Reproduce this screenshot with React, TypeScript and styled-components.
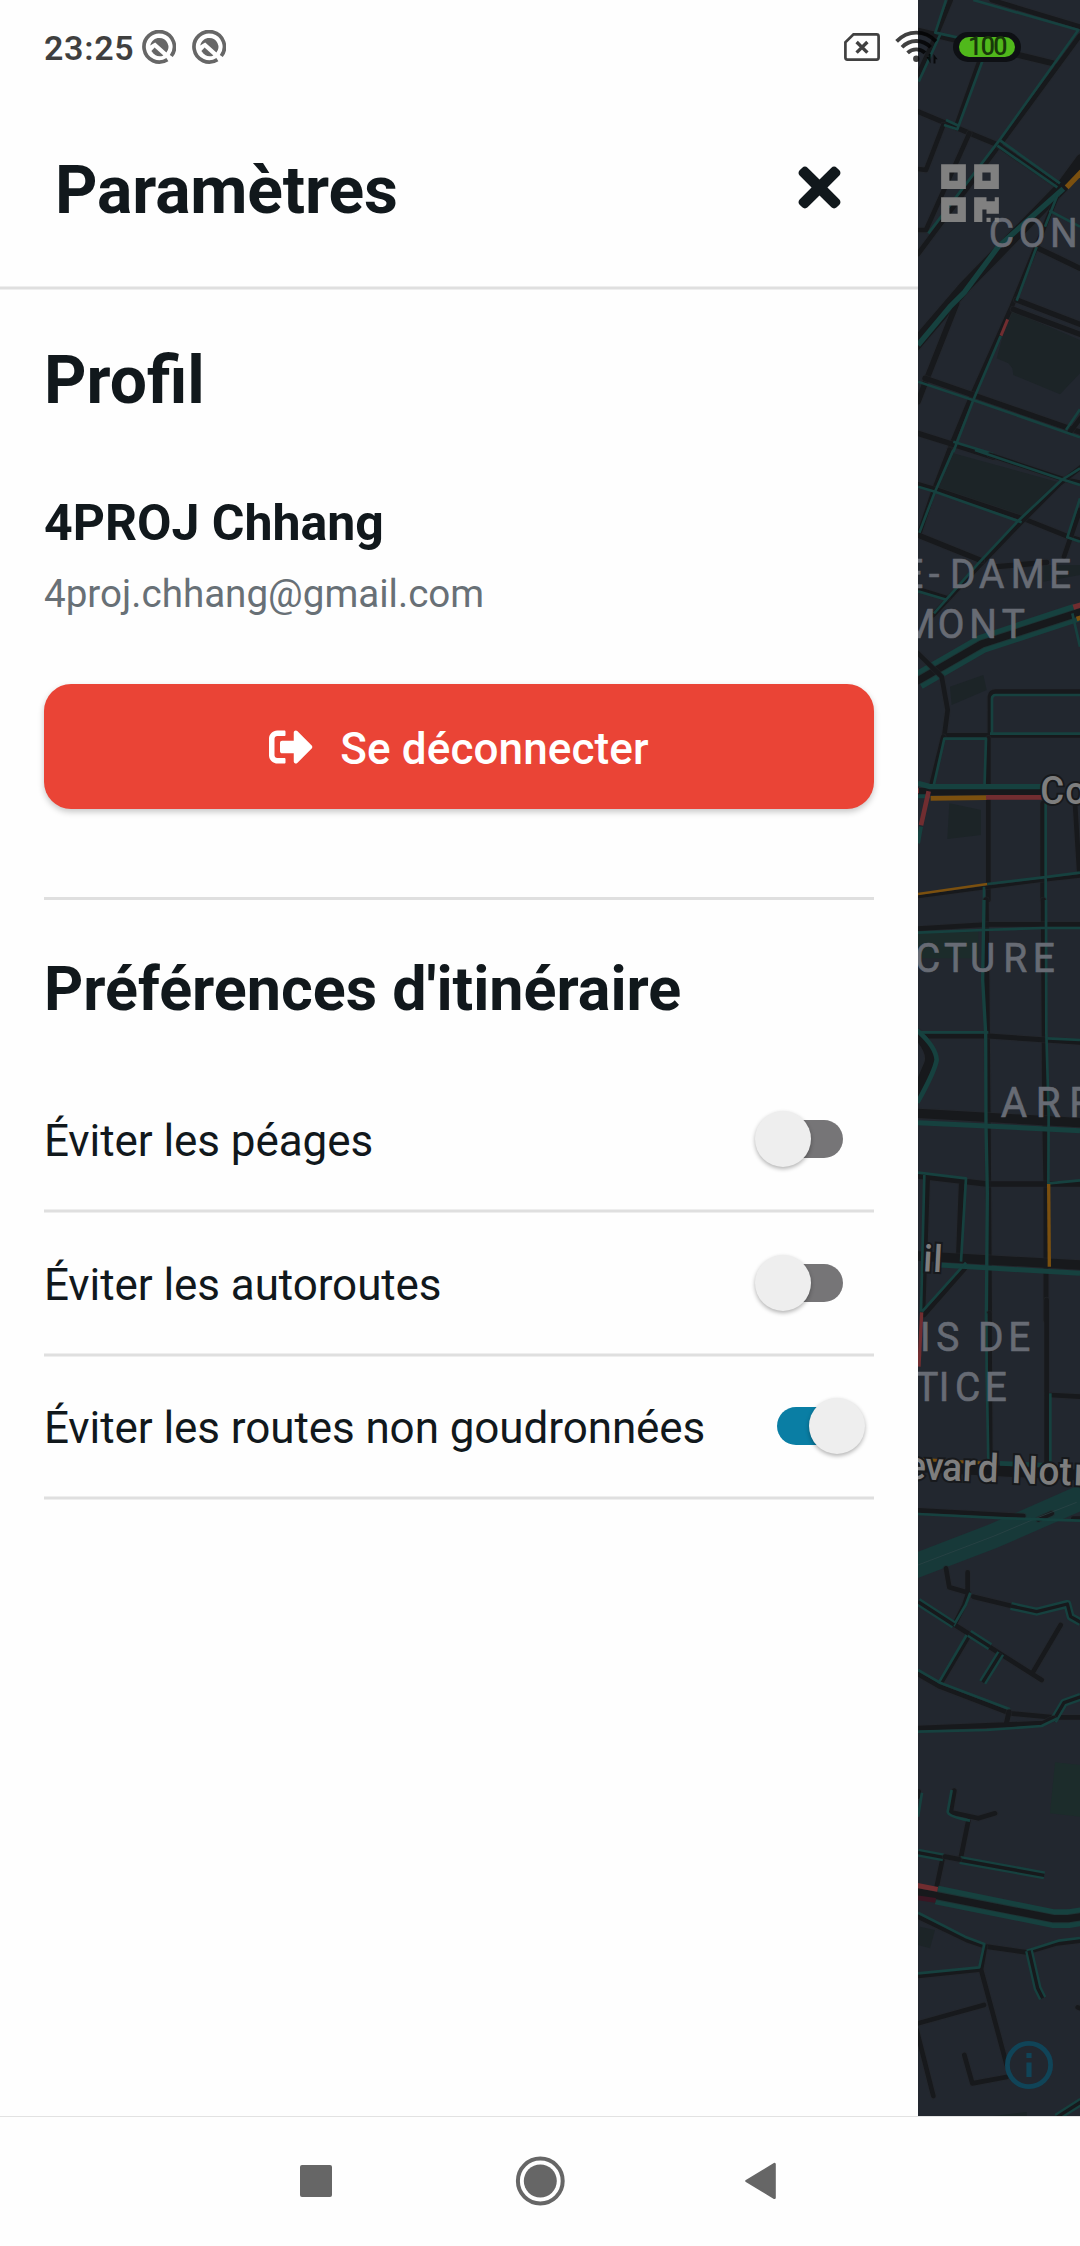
import React, { useState } from "react";
import styled, { createGlobalStyle } from "styled-components";
import { FaQrcode, FaSignOutAlt, FaTimes } from "react-icons/fa";

const GlobalStyle = createGlobalStyle`
  * { box-sizing: border-box; }
  body { margin: 0; background: #fff; font-family: Roboto, "Noto Sans", sans-serif; }
`;

const Screen = styled.div`
  position: relative;
  display: flex;
  flex-direction: column;
  width: 1080px;
  height: 2246px;
  overflow: hidden;
  background: #fefefe;
  color: #11181c;
`;

const Main = styled.main`
  display: flex;
  height: 2116px;
`;

const Drawer = styled.aside`
  width: 918px;
  background: #fefefe;
`;

const Header = styled.header`
  display: flex;
  align-items: center;
  justify-content: space-between;
  height: 286px;
  padding: 94px 68px 0 55px;
`;

const Title = styled.h1`
  margin: 2px 0 0;
  font-size: 66px;
  line-height: 78px;
  font-weight: 700;
  letter-spacing: -0.15px;
`;

const CloseButton = styled.button`
  display: flex;
  margin: 0 0 6px;
  padding: 0;
  border: 0;
  background: none;
  color: #11181c;
  font-size: 61px;
`;

const Rule = styled.hr`
  height: 4px;
  margin: 0;
  border: solid #eeeeee;
  border-width: 1px 0;
  background: #dfdfdf;
`;

const Separator = styled.hr`
  height: 3px;
  margin: 88px 0 53px;
  border: 0;
  background: #dfdfdf;
`;

const Content = styled.div`
  display: flex;
  flex-direction: column;
  padding: 51px 44px 0;
`;

const SectionTitle = styled.h2<{ $size: number; $line: number }>`
  margin: 0;
  font-size: ${(p) => p.$size}px;
  line-height: ${(p) => p.$line}px;
  font-weight: 700;
`;

const UserName = styled.div`
  margin-top: 73px;
  font-size: 50px;
  line-height: 60px;
  font-weight: 700;
`;

const Email = styled.div`
  margin-top: 18px;
  font-size: 38.6px;
  line-height: 46px;
  color: #687076;
`;

const LogoutButton = styled.button`
  display: flex;
  align-items: center;
  justify-content: center;
  gap: 27px;
  height: 125px;
  margin: 67px 0 0;
  padding: 0;
  border: 0;
  border-radius: 27px;
  background: #ea4436;
  box-shadow: 0 3px 6px rgba(0, 0, 0, 0.22);
  color: #fff;
  font: 500 44px/52px Roboto, sans-serif;
  letter-spacing: 0.12px;
`;

const LogoutText = styled.span`
  padding-top: 4px;
`;

const Preferences = styled.div`
  margin-top: 44.6px;
`;

const PreferenceRow = styled.label`
  display: flex;
  align-items: center;
  justify-content: space-between;
  height: 139.5px;
  padding-right: 9px;
  font-size: 44px;
  line-height: 52px;
  letter-spacing: -0.08px;
`;

const PreferenceLabel = styled.span`
  padding-top: 4px;
`;

const SwitchBox = styled.button`
  display: grid;
  align-items: center;
  width: 110px;
  height: 56px;
  padding: 0;
  border: 0;
  background: none;
`;

const SwitchTrack = styled.span<{ $on: boolean }>`
  grid-area: 1 / 1;
  justify-self: center;
  width: 66px;
  height: 38px;
  border-radius: 19px;
  background: ${(p) => (p.$on ? "#0a7ea4" : "#767577")};
`;

const SwitchThumb = styled.span<{ $on: boolean }>`
  grid-area: 1 / 1;
  justify-self: ${(p) => (p.$on ? "end" : "start")};
  width: 56px;
  height: 56px;
  border-radius: 50%;
  background: #eeeeee;
  box-shadow: 0 2px 4px rgba(0, 0, 0, 0.3);
`;

const MapPane = styled.section`
  position: relative;
  width: 162px;
  height: 2116px;
  overflow: hidden;
  background: #22272f;
`;

const MapSvg = styled.svg`
  display: block;
  width: 162px;
  height: 2116px;
`;

const QrButton = styled.div`
  position: absolute;
  left: 19px;
  top: 160px;
  display: flex;
  color: #808080;
  font-size: 66px;
`;

const InfoBadge = styled.svg`
  position: absolute;
  left: 87px;
  top: 2041px;
`;

const StatusBar = styled.div`
  position: absolute;
  inset: 0 0 auto 0;
  display: flex;
  align-items: center;
  height: 94px;
  padding: 0 59px 0 44px;
  color: rgba(0, 0, 0, 0.75);
`;

const Clock = styled.span`
  width: 98px;
  font-size: 34px;
  line-height: 40px;
  font-weight: 600;
  letter-spacing: 0.7px;
  padding-top: 2px;
`;

const Notifications = styled.div`
  display: flex;
  gap: 16px;
`;

const Signals = styled.div`
  display: flex;
  align-items: center;
  margin-left: auto;
`;

const SimSvg = styled.svg`
  margin-right: 15px;
`;

const WifiSvg = styled.svg`
  margin-right: 14px;
`;

const Battery = styled.div`
  display: flex;
  width: 68px;
  height: 30px;
  padding: 5px 6px;
  border-radius: 15px;
  background: #0e1014;
`;

const BatteryFill = styled.div`
  flex: 1;
  display: flex;
  align-items: center;
  justify-content: center;
  border-radius: 10px;
  background: #50b81b;
  color: #18370a;
  font-size: 25px;
  line-height: 20px;
  font-weight: 500;
  letter-spacing: -1.6px;
`;

const NavBar = styled.nav`
  display: flex;
  align-items: center;
  justify-content: center;
  height: 130px;
  padding-bottom: 2px;
  border-top: 1px solid #e2e2e2;
  background: #fefefe;
`;

const NavButton = styled.button`
  display: flex;
  justify-content: center;
  width: 224px;
  padding: 0;
  border: 0;
  background: none;
`;

type Kind = "road" | "flow" | "double" | "slow" | "jam" | "closed" | "park" | "green" | "wide" | "hair";
type Stroke = [Kind, string, number?];
interface Label {
  text: string;
  xs: number[];
  y: number;
  size?: number;
  street?: boolean;
  tilt?: number;
}
interface Tile {
  top: number;
  shapes: Stroke[];
  labels: Label[];
}

const COLORS: Record<Kind, string> = {
  road: "#17191c",
  flow: "#16413f",
  double: "#16413f",
  slow: "#7b500f",
  jam: "#712d30",
  closed: "#3b1623",
  park: "#1c2427",
  green: "#1c2c2b",
  wide: "#173939",
  hair: "#2f4648",
};

// Map geometry is drawn at three units per pixel, split in vertical tiles.
const TILES: Tile[] = [
  {
    top: 0,
    shapes: [
      ["park", "M300 930L510 1020V1120L450 1183L310 1125L307 1105L295 1090L260 1075Z"],
      ["road", "M122 0L82 98L24 225"],
      ["road", "M245 0L510 80"],
      ["road", "M24 92L430 190", 18],
      ["road", "M215 165L140 375"],
      ["road", "M510 107L272 430L24 762"],
      ["road", "M24 335L180 400L262 434L450 563", 15],
      ["road", "M100 375L48 510L24 507"],
      ["road", "M178 400L48 690L24 690"],
      ["road", "M515 480L455 562L165 860L15 1035", 36],
      ["road", "M440 590L305 920L180 1200L118 1350"],
      ["road", "M385 745L510 805", 16],
      ["road", "M320 900L510 973M310 928L510 1003", 16],
      ["road", "M140 910L45 1150L24 1205", 17],
      ["road", "M45 1135L510 1296", 16],
      ["road", "M24 1300L135 1335L250 1372", 16],
      ["road", "M515 1250L480 1296"],
      ["flow", "M108 0L76 98L200 125M90 105L26 245"],
      ["flow", "M190 0L505 90L265 425L55 700"],
      ["flow", "M222 170L142 388L102 375M108 360L146 377"],
      ["flow", "M270 421L450 550M262 437L442 562"],
      ["flow", "M24 1035L120 920L163 877L265 740L460 566", 16],
      ["flow", "M445 578L405 680M418 632L510 680"],
      ["flow", "M380 740L320 902M272 1008L190 1200L130 1355"],
      ["flow", "M24 1145L195 1202L510 1312M510 1228L468 1290M130 1325L250 1362"],
      ["slow", "M470 562L515 515", 16],
      ["jam", "M293 958L273 1007", 9],
    ],
    labels: [{ text: "CON", xs: [236, 326, 420], y: 740 }],
  },
  {
    top: 1350,
    shapes: [
      ["park", "M130 10L440 95L335 210L85 115Z"],
      ["park", "M120 710L220 675L230 720L125 765Z"],
      ["park", "M118 1060L213 1080V1155L112 1167Z"],
      ["park", "M400 345H510V375L400 395Z"],
      ["road", "M118 0L72 120L28 250"],
      ["road", "M240 15L460 88L510 98"],
      ["road", "M24 103L75 118L340 206L470 258L510 270"],
      ["road", "M515 50L450 100L330 220L205 350L70 495"],
      ["road", "M510 180L462 320"],
      ["road", "M24 255L215 332M260 350L410 337", 16],
      ["road", "M24 418L112 445"],
      ["flow", "M130 0L75 125L28 248M195 0L455 88L510 105"],
      ["flow", "M24 110L75 125L335 217M510 145L472 262L510 275"],
      ["flow", "M510 55L455 90L325 212L205 340L72 490M24 424L112 450"],
      ["flow", "M24 692L215 582L500 488", 56],
      ["road", "M24 692L215 582L515 485", 22],
      ["jam", "M490 472L515 464", 16],
      ["slow", "M500 507L515 502", 14],
      ["flow", "M487 490L510 590"],
      ["road", "M24 610L95 680L113 780L103 856H510M240 855V740Q242 725 257 725H510"],
      ["road", "M100 860L62 1015M235 865V1350M398 1060V1350M495 1060L508 1270"],
      ["flow", "M68 1020L103 866H228L223 1025M246 855V745Q247 735 257 735H510M240 851H510"],
      ["road", "M24 1025H395", 22],
      ["flow", "M24 1000L60 1010H400", 16],
      ["flow", "M24 1039H60M33 1130L24 1180", 12],
      ["slow", "M62 1045L230 1043", 14],
      ["jam", "M228 1042H395M56 1024L33 1126M20 1015V1030", 14],
      ["road", "M24 1340L232 1312L400 1290L510 1278", 10],
      ["slow", "M24 1332L232 1302"],
      ["flow", "M232 1302L400 1282L510 1268M407 1060V1350M222 1310V1350"],
    ],
    labels: [
      { text: "E-DAME", xs: [-26, 56, 120, 207, 302, 417], y: 413 },
      { text: "MONT", xs: [-25, 83, 178, 275], y: 563 },
      { text: "Co", xs: [391, 466], y: 1061, size: 117, street: true },
    ],
  },
  {
    top: 2700,
    shapes: [
      ["green", "M24 100L205 95V175H24Z"],
      ["road", "M228 0L230 240L234 680L238 1260", 16],
      ["road", "M400 0L404 640L408 860V1260", 15],
      ["road", "M24 86L240 73H510", 14],
      ["road", "M24 408H235L510 427", 15],
      ["road", "M14 395Q70 450 58 490L20 580", 30],
      ["road", "M24 640L510 668", 28],
      ["road", "M24 828L230 852H510M155 840L146 1070M52 830L38 1230", 16],
      ["road", "M24 1068L510 1095", 28],
      ["road", "M165 1105L42 1245"],
      ["flow", "M24 98L220 90L395 84H510M24 397H235M412 415L510 420"],
      ["flow", "M222 0L218 240L227 400L228 680L232 880L229 1260", 10],
      ["flow", "M408 0L409 400L416 640L415 850L510 841"],
      ["flow", "M20 390Q78 440 80 480Q74 515 22 608", 14],
      ["flow", "M24 668L510 692M90 1095L510 1120", 15],
      ["flow", "M24 818L168 835L153 1085M43 825L33 1235M168 1088L36 1235"],
      ["slow", "M416 852L418 1100", 10],
      ["jam", "M35 1237L27 1400", 10],
    ],
    labels: [
      { text: "CTURE", xs: [15, 102, 180, 280, 368], y: 215 },
      { text: "ARR", xs: [272, 377, 478], y: 652, size: 129 },
      { text: "il", xs: [38, 68], y: 1113, size: 113, street: true, tilt: 3 },
    ],
  },
  {
    top: 3900,
    shapes: [
      ["road", "M238 40L241 500M410 0V500M420 285L510 290"],
      ["flow", "M229 40L230 210L235 490M421 280V490"],
      ["road", "M24 500L510 525", 32],
      ["slow", "M24 478L235 490", 9],
      ["flow", "M270 490L420 496", 14],
      ["wide", "M10 800L250 708L520 590", 74],
      ["road", "M24 631L340 648M385 658L425 640M490 656H510", 14],
      ["hair", "M24 795L255 707L390 650L500 607", 2],
      ["flow", "M24 642L290 655L510 662"],
      ["road", "M108 805L118 862L175 878L163 915L135 970M173 817V878M190 890L305 918"],
      ["road", "M135 975L395 1140M452 975L368 1118M175 1010L92 1150"],
      ["road", "M24 1122L90 1160L300 1240L430 1252H510", 14],
      ["flow", "M181 878L167 915L130 978M170 1005L85 1150M24 1110L90 1148L300 1228"],
      ["double", "M24 905L132 975M178 1000L240 1040M272 1060L218 1147"],
      ["double", "M303 918L380 935L472 912L482 950L512 967"],
      ["double", "M430 1262L462 1208L512 1190"],
    ],
    labels: [
      { text: "IS DE", xs: [30, 79, 150, 204, 295], y: 153 },
      { text: "TICE", xs: [16, 86, 135, 224], y: 302 },
      { text: "evard Notr", xs: [-13, 44, 95, 157, 202, 260, 304, 384, 447, 491], y: 538, size: 118, street: true, tilt: 2.2 },
    ],
  },
  {
    top: 5100,
    shapes: [
      ["green", "M435 187L510 195V350L420 340Z"],
      ["park", "M30 680L75 690L60 745L24 735Z"],
      ["road", "M297 36L288 75M24 85L400 70L430 55", 15],
      ["flow", "M24 95L230 90L395 78L442 55"],
      ["road", "M133 272L122 337L205 355L255 340M175 362L153 470M97 480L80 560M26 275L24 290"],
      ["flow", "M125 270L113 335Q114 350 180 362M36 278L24 350"],
      ["double", "M24 458L100 472M150 480L403 526"],
      ["road", "M105 470L148 478"],
      ["flow", "M80 585L430 656H475L515 650", 56],
      ["road", "M20 575L85 588L430 656H475L515 650", 22],
      ["jam", "M20 556L83 568", 15],
      ["closed", "M20 593L77 601", 14],
      ["road", "M24 650L170 720L230 740L350 757L440 730L510 722"],
      ["road", "M225 740L213 808L24 828M213 808L290 1095"],
      ["road", "M24 970L222 915M20 990L70 1188M163 1065L187 1150L290 1131M503 922L520 928"],
      ["flow", "M24 638L165 710L223 732L208 802L24 820M350 752L445 722L510 714"],
      ["double", "M357 752L383 865L398 895M440 1252L515 1204"],
      ["park", "M250 1248L350 1236V1248Z"],
    ],
    labels: [],
  },
];

const CONDENSE = 0.94;

function MapShape({ shape }: { shape: Stroke }) {
  const [kind, d, width] = shape;
  if (kind === "park" || kind === "green") return <path d={d} fill={COLORS[kind]} />;
  const fallback = kind === "road" ? 14 : kind === "double" ? 24 : 8;
  const cap = kind === "road" ? "round" : "butt";
  return (
    <g fill="none" strokeLinejoin="round" strokeLinecap={cap}>
      {kind === "road" && <path d={d} stroke="#26272c" strokeWidth={(width ?? fallback) + 5} strokeOpacity={0.5} />}
      <path d={d} stroke={COLORS[kind]} strokeWidth={width ?? fallback} />
      {kind === "double" && <path d={d} stroke={COLORS.road} strokeWidth={10} />}
    </g>
  );
}

function MapLabel({ label }: { label: Label }) {
  return (
    <text
      transform={`rotate(${label.tilt ?? 0} 24 ${label.y}) scale(${CONDENSE} 1)`}
      x={label.xs.map((x) => x / CONDENSE).join(" ")}
      y={label.y}
      fontFamily="Roboto, sans-serif"
      fontSize={label.size ?? 124}
      fontWeight={label.street ? 500 : 400}
      fill={label.street ? "#7e7e7e" : "#676b74"}
      stroke={label.street ? "#17191c" : "#676b74"}
      strokeWidth={label.street ? 12 : 2}
      paintOrder="stroke"
    >
      {label.text}
    </text>
  );
}

function CityMap() {
  return (
    <MapPane>
      <MapSvg viewBox="24 0 486 6348" preserveAspectRatio="none">
        {TILES.map((tile) => (
          <g key={tile.top} transform={`translate(0 ${tile.top})`}>
            {tile.shapes.map((shape, i) => (
              <MapShape key={i} shape={shape} />
            ))}
          </g>
        ))}
        {TILES.map((tile) => (
          <g key={tile.top} transform={`translate(0 ${tile.top})`}>
            {tile.labels.map((label) => (
              <MapLabel key={label.text} label={label} />
            ))}
          </g>
        ))}
      </MapSvg>
      <QrButton>
        <FaQrcode />
      </QrButton>
      <InfoBadge width="48" height="48" viewBox="0 0 48 48">
        <circle cx="24" cy="24" r="21.6" fill="none" stroke="#104458" strokeWidth="4.8" />
        <path d="M21.4 12h5.2v5h-5.2zM21.4 21.6h5.2V36h-5.2z" fill="#104458" />
      </InfoBadge>
    </MapPane>
  );
}

function AndroidBadge() {
  return (
    <svg width="34" height="34" viewBox="0 0 34 34">
      <path d="M25.4 29.6A15.2 15.2 0 1 1 29.3 26" fill="none" stroke="#666" strokeWidth="3.7" />
      <path d="M8.2 15.6C9.4 10.6 13 8 17.2 8a9 9 0 0 1 7.2 14.6L13.2 12.4Z" fill="#666" />
      <path d="M12.6 17.6L21.4 25.4C17 27.4 12.6 26 9.4 21Z" fill="#666" />
    </svg>
  );
}

function SimIcon() {
  return (
    <SimSvg width="36" height="28" viewBox="0 0 36 28" fill="none" stroke="currentColor">
      <path d="M9.5 1.4H32.6a2 2 0 0 1 2 2V24.6a2 2 0 0 1-2 2H3.4a2 2 0 0 1-2-2V9.4Z" strokeWidth="2.7" />
      <path d="M12.6 9L23.4 19.6M23.4 9L12.6 19.6" strokeWidth="3.4" />
    </SimSvg>
  );
}

function WifiIcon() {
  return (
    <WifiSvg width="44" height="34" viewBox="0 0 44 34" fill="none">
      <g stroke="currentColor" strokeWidth="3.8">
        <path d="M1.6 11.4Q10 2.6 21.3 2.6T41 11.4" />
        <path d="M7 17.2Q13 11 21.3 11T35.6 17.2" />
        <path d="M12.6 22.8Q16.3 19.3 21.3 19.3T30 22.8" />
      </g>
      <circle cx="21.3" cy="28.8" r="3.2" fill="currentColor" />
      <path d="M31.5 27h2.3v-3h1.8v9.4zM38.5 33.4V24l4.2 5.2h-2.2v4.2z" fill="currentColor" />
    </WifiSvg>
  );
}

function Switch({ on, onToggle }: { on: boolean; onToggle: () => void }) {
  return (
    <SwitchBox type="button" role="switch" aria-checked={on} onClick={onToggle}>
      <SwitchTrack $on={on} />
      <SwitchThumb $on={on} />
    </SwitchBox>
  );
}

export default function App() {
  const [preferences, setPreferences] = useState([
    { label: "Éviter les péages", on: false },
    { label: "Éviter les autoroutes", on: false },
    { label: "Éviter les routes non goudronnées", on: true },
  ]);
  const toggle = (index: number) =>
    setPreferences((list) => list.map((p, i) => (i === index ? { ...p, on: !p.on } : p)));

  return (
    <>
      <GlobalStyle />
      <Screen>
        <Main>
          <Drawer>
            <Header>
              <Title>Paramètres</Title>
              <CloseButton type="button">
                <FaTimes />
              </CloseButton>
            </Header>
            <Rule />
            <Content>
              <SectionTitle $size={66} $line={79}>Profil</SectionTitle>
              <UserName>4PROJ Chhang</UserName>
              <Email>4proj.chhang@gmail.com</Email>
              <LogoutButton type="button">
                <FaSignOutAlt />
                <LogoutText>Se déconnecter</LogoutText>
              </LogoutButton>
              <Separator />
              <SectionTitle $size={61} $line={72}>Préférences d'itinéraire</SectionTitle>
              <Preferences>
                {preferences.map((p, i) => (
                  <React.Fragment key={p.label}>
                    <PreferenceRow>
                      <PreferenceLabel>{p.label}</PreferenceLabel>
                      <Switch on={p.on} onToggle={() => toggle(i)} />
                    </PreferenceRow>
                    <Rule />
                  </React.Fragment>
                ))}
              </Preferences>
            </Content>
          </Drawer>
          <CityMap />
        </Main>
        <NavBar>
          <NavButton type="button">
            <svg width="32" height="32" viewBox="0 0 32 32">
              <rect width="32" height="32" rx="2" fill="#666" />
            </svg>
          </NavButton>
          <NavButton type="button">
            <svg width="50" height="50" viewBox="0 0 50 50">
              <circle cx="25.3" cy="25" r="22.4" fill="none" stroke="#666" strokeWidth="4" />
              <circle cx="25.3" cy="25" r="16.5" fill="#666" />
            </svg>
          </NavButton>
          <NavButton type="button">
            <svg width="40" height="40" viewBox="0 0 40 40">
              <path d="M2.5 20L30.5 3.2V36.8Z" fill="#666" stroke="#666" strokeWidth="2.6" strokeLinejoin="round" />
            </svg>
          </NavButton>
        </NavBar>
        <StatusBar>
          <Clock>23:25</Clock>
          <Notifications>
            <AndroidBadge />
            <AndroidBadge />
          </Notifications>
          <Signals>
            <SimIcon />
            <WifiIcon />
            <Battery>
              <BatteryFill>100</BatteryFill>
            </Battery>
          </Signals>
        </StatusBar>
      </Screen>
    </>
  );
}
